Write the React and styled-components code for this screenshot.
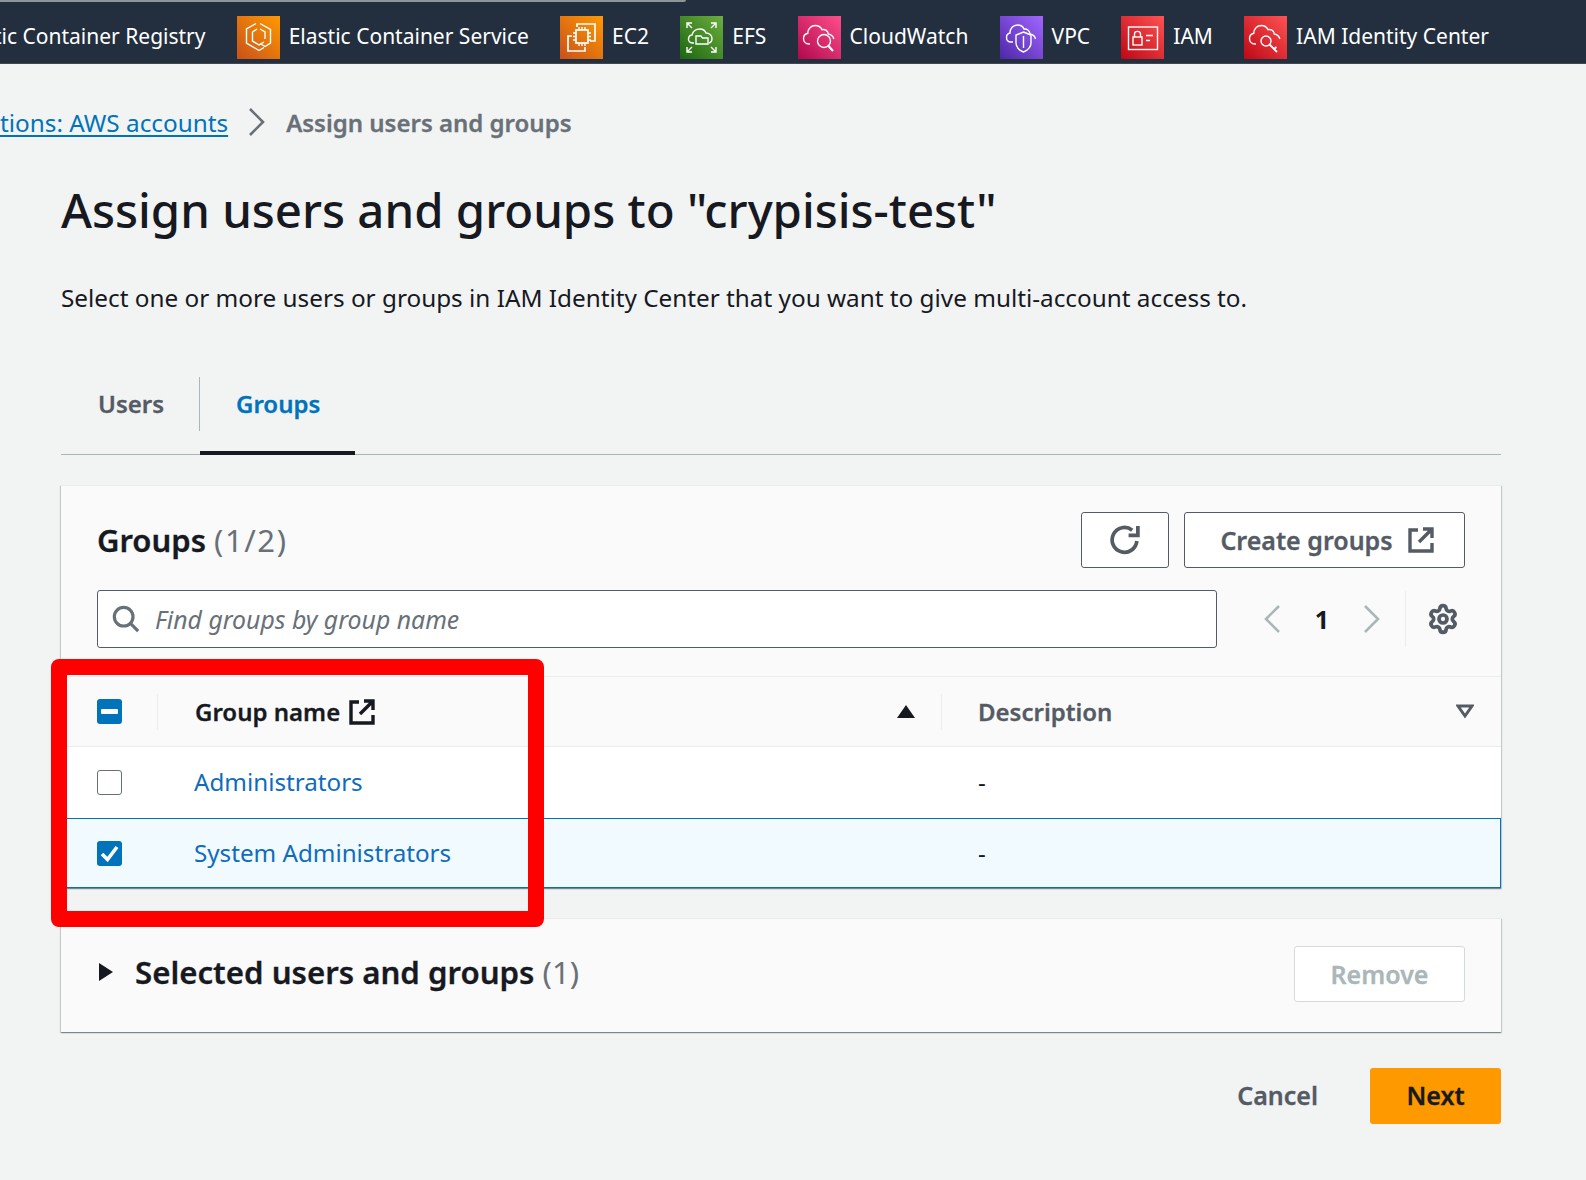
import styled, { createGlobalStyle, css } from 'styled-components';
import { Settings } from 'lucide-react';

const GlobalStyle = createGlobalStyle`
  html, body {
    margin: 0;
    width: 1586px;
    height: 1180px;
    overflow: hidden;
    background: #f2f3f3;
    font-family: "Noto Sans", "Liberation Sans", sans-serif;
    color: #16191f;
  }
`;

// Noto semibold runs a bit thinner than the console font
const heavy = css`
  font-weight: 600;
  -webkit-text-stroke: 0.3px currentColor;
`;

const Page = styled.div`
  position: relative;
  width: 1586px;
  height: 1180px;
  overflow: hidden;
`;

const Nav = styled.nav`
  height: 64px;
  box-sizing: border-box;
  background: #232f3e;
  border-bottom: 1px solid #414750;
`;

const SearchEdge = styled.div`
  width: 686px;
  height: 2px;
  background: #8d9599;
  border-bottom-right-radius: 2px;
`;

const NavRow = styled.div`
  display: flex;
  align-items: center;
  gap: 31.2px;
  height: 43px;
  margin: 14px 0 0 -6px;
  white-space: nowrap;
`;

const NavItem = styled.div`
  display: flex;
  align-items: center;
  gap: 9px;
  color: #fff;
  font-size: 21px;
`;

const NavLabel = styled.span`
  padding-bottom: 3px;
`;

const ServiceIcon = styled.svg`
  width: 43px;
  height: 43px;
  flex: none;
  background: linear-gradient(45deg, ${(p) => p.$from}, ${(p) => p.$to});
  fill: none;
  stroke: #fff;
  stroke-width: 1.4;
`;

const Main = styled.main`
  padding: 0 85px 0 61px;
`;

const Breadcrumbs = styled.div`
  display: flex;
  align-items: center;
  gap: 19px;
  height: 40px;
  margin: 38px 0 0 -61px;
  font-size: 24.3px;
`;

const CrumbLink = styled.a`
  color: #0073bb;
  text-decoration: underline;
  text-underline-offset: 3px;
`;

const CrumbCurrent = styled.span`
  ${heavy}
  color: #687078;
  font-size: 24px;
`;

const CrumbArrow = styled.svg`
  width: 20px;
  height: 30px;
  fill: none;
  stroke: #687078;
  stroke-width: 2.6;
`;

const Title = styled.h1`
  margin: 37px 0 0;
  font-size: 47.35px;
  line-height: 62px;
  font-weight: 500;
`;

const Intro = styled.p`
  margin: 39px 0 0;
  font-size: 24.3px;
  line-height: 36px;
`;

const Tabs = styled.div`
  display: flex;
  height: 78px;
  margin-top: 61px;
  box-sizing: border-box;
  border-bottom: 1px solid #aab7b8;
`;

const Tab = styled.div`
  ${heavy}
  display: flex;
  align-items: flex-start;
  justify-content: flex-start;
  width: ${(p) => p.$width}px;
  box-sizing: border-box;
  margin-bottom: -1px;
  padding: 9px 0 0 ${(p) => p.$pad}px;
  font-size: 24px;
  line-height: 36px;
  color: ${(p) => (p.$active ? '#0073bb' : '#545b64')};
  border-bottom: 4px solid ${(p) => (p.$active ? '#16191f' : 'transparent')};
`;

const TabDivider = styled.div`
  width: 1px;
  height: 54px;
  background: #aab7b8;
`;

const Panel = styled.section`
  background: #fafafa;
  border-top: 1px solid #eaeded;
  box-shadow: 0 1px 1px 0 rgba(0, 28, 36, 0.3), 1px 1px 1px 0 rgba(0, 28, 36, 0.15), -1px 1px 1px 0 rgba(0, 28, 36, 0.15);
`;

const GroupsPanel = styled(Panel)`
  margin-top: 30px;
`;

const PanelHead = styled.div`
  padding: 26px 36px 28px 36px;
`;

const HeadRow = styled.div`
  display: flex;
  align-items: center;
  justify-content: space-between;
`;

const PanelTitle = styled.h2`
  margin: 0;
  font-size: 31px;
  line-height: 40px;
  font-weight: 600;
  -webkit-text-stroke: 0.3px currentColor;
`;

const Count = styled.span`
  color: #687078;
  font-weight: 400;
  -webkit-text-stroke: 0;
`;

const WideCount = styled(Count)`
  letter-spacing: 1.6px;
`;

const HeadActions = styled.div`
  display: flex;
  gap: 15px;
`;

const Button = styled.button`
  ${heavy}
  display: flex;
  align-items: center;
  justify-content: center;
  gap: 15px;
  width: ${(p) => p.$width}px;
  height: 56px;
  box-sizing: border-box;
  padding: 0 0 0 ${(p) => p.$shift || 0}px;
  background: #fff;
  border: 1px solid ${(p) => (p.disabled ? '#d5dbdb' : '#545b64')};
  border-radius: 3px;
  color: ${(p) => (p.disabled ? '#aab7b8' : '#545b64')};
  font-family: inherit;
  font-size: 25px;
`;

const FilterRow = styled.div`
  display: flex;
  align-items: center;
  margin-top: 22px;
`;

const SearchBox = styled.div`
  display: flex;
  flex: none;
  align-items: center;
  gap: 15px;
  width: 1120px;
  height: 58px;
  box-sizing: border-box;
  padding-left: 14px;
  background: #fff;
  border: 1px solid #545b64;
  border-radius: 3px;
  color: #687078;
  font-size: 24.8px;
  font-style: italic;
`;

const Pager = styled.div`
  display: flex;
  flex: none;
  align-items: center;
  margin-left: 44px;
`;

const PagerArrow = styled.svg`
  width: 22px;
  height: 32px;
  fill: none;
  stroke: #aab7b8;
  stroke-width: 2.6;
`;

const PageNumber = styled.span`
  width: 78px;
  text-align: center;
  font-size: 25px;
  font-weight: 700;
`;

const PrefButton = styled.div`
  display: flex;
  flex: none;
  align-items: center;
  justify-content: center;
  width: 74px;
  height: 56px;
  margin: 0 -14px 0 22px;
  border-left: 1px solid #eaeded;
  color: #545b64;
`;

const Row = styled.div`
  display: grid;
  grid-template-columns: 96px 784px 1fr;
  align-items: center;
  box-sizing: border-box;
  height: ${(p) => p.$height}px;
  font-size: 24.2px;
  background: ${(p) => (p.$selected ? '#f1faff' : p.$head ? '#fafafa' : '#fff')};
  border-top: 1px solid ${(p) => (p.$selected ? '#0073bb' : '#eaeded')};
  ${(p) => p.$selected && 'border-right: 1px solid #0073bb; border-bottom: 1px solid #0073bb;'}
`;

const CheckCell = styled.div`
  display: flex;
  padding-left: 36px;
`;

const NameCell = styled.div`
  display: flex;
  align-items: center;
  gap: 9px;
  padding: 0 0 ${(p) => p.$lift || 0}px 37px;
`;

const HeadCell = styled.div`
  ${heavy}
  display: flex;
  align-items: center;
  justify-content: space-between;
  height: 36px;
  box-sizing: border-box;
  padding: 0 ${(p) => p.$right}px 0 ${(p) => p.$left}px;
  border-left: 1px solid #eaeded;
  color: ${(p) => (p.$active ? '#16191f' : '#545b64')};
  font-size: 24px;
`;

const HeadLabel = styled.span`
  display: flex;
  align-items: center;
  gap: 9px;
`;

const Check = styled.span`
  display: flex;
  align-items: center;
  justify-content: center;
  width: 25px;
  height: 25px;
  box-sizing: border-box;
  border-radius: 3px;
  background: ${(p) => (p.$on ? '#0073bb' : '#fff')};
  border: ${(p) => (p.$on ? 'none' : '1.5px solid #687078')};
`;

const GroupLink = styled.a`
  color: #0f6cbd;
`;

const Dash = styled.div`
  padding: 0 0 ${(p) => p.$lift || 0}px 37px;
`;

const SortUp = styled.span`
  width: 0;
  height: 0;
  border-left: 9px solid transparent;
  border-right: 9px solid transparent;
  border-bottom: 13px solid #16191f;
`;

const SelectedPanel = styled(Panel)`
  display: flex;
  align-items: center;
  justify-content: space-between;
  height: 114px;
  box-sizing: border-box;
  margin-top: 30px;
  padding: 0 36px 4px 37px;
`;

const SelectedTitle = styled.h2`
  display: flex;
  align-items: center;
  gap: 22px;
  margin: 0;
  padding-bottom: 4px;
  font-size: 31.2px;
  font-weight: 600;
  -webkit-text-stroke: 0.3px currentColor;
`;

const Caret = styled.span`
  width: 0;
  height: 0;
  margin-left: 1px;
  border-top: 9px solid transparent;
  border-bottom: 9px solid transparent;
  border-left: 14px solid #16191f;
`;

const Footer = styled.div`
  display: flex;
  align-items: center;
  justify-content: flex-end;
  gap: 52px;
  margin-top: 36px;
`;

const CancelLink = styled.span`
  ${heavy}
  padding-bottom: 2px;
  color: #545b64;
  font-size: 25px;
`;

const NextButton = styled.button`
  ${heavy}
  width: 131px;
  height: 56px;
  padding: 0 0 2px;
  border: none;
  border-radius: 3px;
  background: #ff9900;
  color: #16191f;
  font-family: inherit;
  font-size: 25px;
`;

// the annotation someone put on top of the screenshot
const Highlight = styled.div`
  position: absolute;
  left: 51px;
  top: 659px;
  width: 493px;
  height: 268px;
  box-sizing: border-box;
  border: 16px solid #ff0000;
  border-radius: 8px;
`;

const cloud = 'M12 28H11C7.5 28 5.5 25.5 5.5 22.5C5.5 19.7 7.3 17.8 9.8 17.2C9.8 13 13 9.5 17.3 9.5C20.3 9.5 22.8 11.2 24 13.6C27.3 12.8 30 15 30.3 18C33.3 18.6 35.3 20.6 35.8 23';

const ExternalIcon = ({ color }) => (
  <svg width="26" height="26" viewBox="0 0 26 26" fill="none" stroke={color} strokeWidth="3.4">
    <path d="M10 3H2v21h22v-8" />
    <path d="M11 15 24 2M15 2h9v9" />
  </svg>
);

const App = () => (
  <Page>
    <GlobalStyle />
    <Nav>
      <SearchEdge />
      <NavRow>
        <NavItem><NavLabel>tic Container Registry</NavLabel></NavItem>
        <NavItem>
          <ServiceIcon viewBox="0 0 43 43" $from="#c8511b" $to="#ff9900">
            <path d="M19 7.5 9.5 13v14L22 34.5l5-3" />
            <path d="M23 7.5 33.5 13.5V27L28 30.5 23 27.5" />
            <path d="M20 13 15.5 16V25L22 29 27 26" />
            <path d="M23 13 28 16V23" />
          </ServiceIcon>
          <NavLabel>Elastic Container Service</NavLabel>
        </NavItem>
        <NavItem>
          <ServiceIcon viewBox="0 0 43 43" $from="#c8511b" $to="#ff9900">
            <path d="M17 11V8H35V25H30" strokeWidth="1.7" />
            <path d="M12 20H8V35H25V31" strokeWidth="1.7" />
            <rect x="16" y="14" width="12" height="13" strokeWidth="1.7" />
            <path d="M19 11V14M22 11V14M25 11V14M19 27V30M22 27V30M25 27V30M13 17H16M13 20.5H16M13 24H16M28 17H31M28 20.5H31M28 24H31" />
          </ServiceIcon>
          <NavLabel>EC2</NavLabel>
        </NavItem>
        <NavItem>
          <ServiceIcon viewBox="0 0 43 43" $from="#1b660f" $to="#6cae3e">
            <path d="M7 12V7H12M7 7 12 12M36 12V7H31M36 7 31 12M7 31V36H12M7 36 12 31M36 31V36H31M36 36 31 31" />
            <path d="M14 27H13C10 27 8 25 8.5 22.5 9 20 11 19 12 19 13 15 16 13 20 13 23 13 25 14.5 26 17 29 17 32 19 32 22.5 32 25 31 26.5 29 27" />
            <path d="M16 20H21L22.5 22H28V28H16Z" />
          </ServiceIcon>
          <NavLabel>EFS</NavLabel>
        </NavItem>
        <NavItem>
          <ServiceIcon viewBox="0 0 43 43" $from="#b0084d" $to="#ff4f8b">
            <path d={cloud} />
            <circle cx="26" cy="25" r="6.5" />
            <path d="M30.5 30 35 35" strokeWidth="2.2" />
          </ServiceIcon>
          <NavLabel>CloudWatch</NavLabel>
        </NavItem>
        <NavItem>
          <ServiceIcon viewBox="0 0 43 43" $from="#4d27a8" $to="#a166ff">
            <path d="M13 26H11C8 26 6.5 24 6.5 21.5 6.5 19 8 17.5 10 17 10 12.5 13 9 17.5 9 20.5 9 23 10.5 24 13 27 12.5 30 15 30 18 33 18.5 35 20.5 35.5 23" />
            <path d="M23.5 16 31 19V27C31 31 28 34 23.5 36 19 34 16 31 16 27V19Z" />
            <path d="M23.5 20V32" />
          </ServiceIcon>
          <NavLabel>VPC</NavLabel>
        </NavItem>
        <NavItem>
          <ServiceIcon viewBox="0 0 43 43" $from="#bd0816" $to="#ff5252">
            <rect x="7.5" y="11" width="29" height="22.5" />
            <rect x="12" y="21" width="9" height="8" />
            <path d="M13.5 21V18C13.5 14.5 19.5 14.5 19.5 18V21" />
            <path d="M25 19.5H32M25 24.5H29" />
          </ServiceIcon>
          <NavLabel>IAM</NavLabel>
        </NavItem>
        <NavItem>
          <ServiceIcon viewBox="0 0 43 43" $from="#bd0816" $to="#ff5252">
            <path d={cloud} />
            <circle cx="22" cy="25" r="5" />
            <path d="M25.5 28.5 33 36M30 33 32.5 31" strokeWidth="1.8" />
          </ServiceIcon>
          <NavLabel>IAM Identity Center</NavLabel>
        </NavItem>
      </NavRow>
    </Nav>
    <Main>
      <Breadcrumbs>
        <CrumbLink>tions: AWS accounts</CrumbLink>
        <CrumbArrow viewBox="0 0 20 30"><path d="M3 2 16 15 3 28" /></CrumbArrow>
        <CrumbCurrent>Assign users and groups</CrumbCurrent>
      </Breadcrumbs>
      <Title>Assign users and groups to "crypisis-test"</Title>
      <Intro>Select one or more users or groups in IAM Identity Center that you want to give multi-account access to.</Intro>
      <Tabs>
        <Tab $width={138} $pad={37}>Users</Tab>
        <TabDivider />
        <Tab $active $width={155} $pad={36}>Groups</Tab>
      </Tabs>
      <GroupsPanel>
        <PanelHead>
          <HeadRow>
            <PanelTitle>Groups <WideCount>(1/2)</WideCount></PanelTitle>
            <HeadActions>
              <Button $width={88} aria-label="Refresh">
                <svg width="33" height="33" viewBox="0 0 32 32" fill="none" stroke="#545b64" strokeWidth="3.6">
                  <path d="M27 16.5A12 12 0 1 1 22.5 6" />
                  <path d="M28 2V11H19" />
                </svg>
              </Button>
              <Button $width={281} $shift={5}>
                Create groups
                <ExternalIcon color="#545b64" />
              </Button>
            </HeadActions>
          </HeadRow>
          <FilterRow>
            <SearchBox>
              <svg width="28" height="28" viewBox="0 0 30 30" fill="none" stroke="#687078" strokeWidth="3.4">
                <circle cx="12.5" cy="12.5" r="10" />
                <path d="M19.5 19.5 28 28" />
              </svg>
              Find groups by group name
            </SearchBox>
            <Pager>
              <PagerArrow viewBox="0 0 22 32"><path d="M18 3 5 16 18 29" /></PagerArrow>
              <PageNumber>1</PageNumber>
              <PagerArrow viewBox="0 0 22 32"><path d="M4 3 17 16 4 29" /></PagerArrow>
            </Pager>
            <PrefButton><Settings size={32} strokeWidth={2.8} /></PrefButton>
          </FilterRow>
        </PanelHead>
        <Row $head $height={70}>
          <CheckCell>
            <Check $on>
              <svg width="17" height="5" viewBox="0 0 17 5"><rect width="17" height="5" rx="1" fill="#fff" /></svg>
            </Check>
          </CheckCell>
          <HeadCell $active $left={37} $right={26}>
            <HeadLabel>Group name <ExternalIcon color="#16191f" /></HeadLabel>
            <SortUp />
          </HeadCell>
          <HeadCell $left={36} $right={27}>
            Description
            <svg width="18" height="15" viewBox="0 0 18 15" fill="none" stroke="#545b64" strokeWidth="3"><path d="M2 2H16L9 12Z" /></svg>
          </HeadCell>
        </Row>
        <Row $height={72}>
          <CheckCell><Check /></CheckCell>
          <NameCell $lift={2}><GroupLink>Administrators</GroupLink></NameCell>
          <Dash $lift={2}>-</Dash>
        </Row>
        <Row $selected $height={70}>
          <CheckCell>
            <Check $on>
              <svg width="19" height="17" viewBox="0 0 19 17" fill="none" stroke="#fff" strokeWidth="3.6"><path d="M2 9 7.5 14.5 17 2" /></svg>
            </Check>
          </CheckCell>
          <NameCell $lift={1}><GroupLink>System Administrators</GroupLink></NameCell>
          <Dash $lift={1}>-</Dash>
        </Row>
      </GroupsPanel>
      <SelectedPanel>
        <SelectedTitle><Caret />
          <span>Selected users and groups <Count>(1)</Count></span>
        </SelectedTitle>
        <Button disabled $width={171}>Remove</Button>
      </SelectedPanel>
      <Footer>
        <CancelLink>Cancel</CancelLink>
        <NextButton>Next</NextButton>
      </Footer>
    </Main>
    <Highlight />
  </Page>
);

export default App;
